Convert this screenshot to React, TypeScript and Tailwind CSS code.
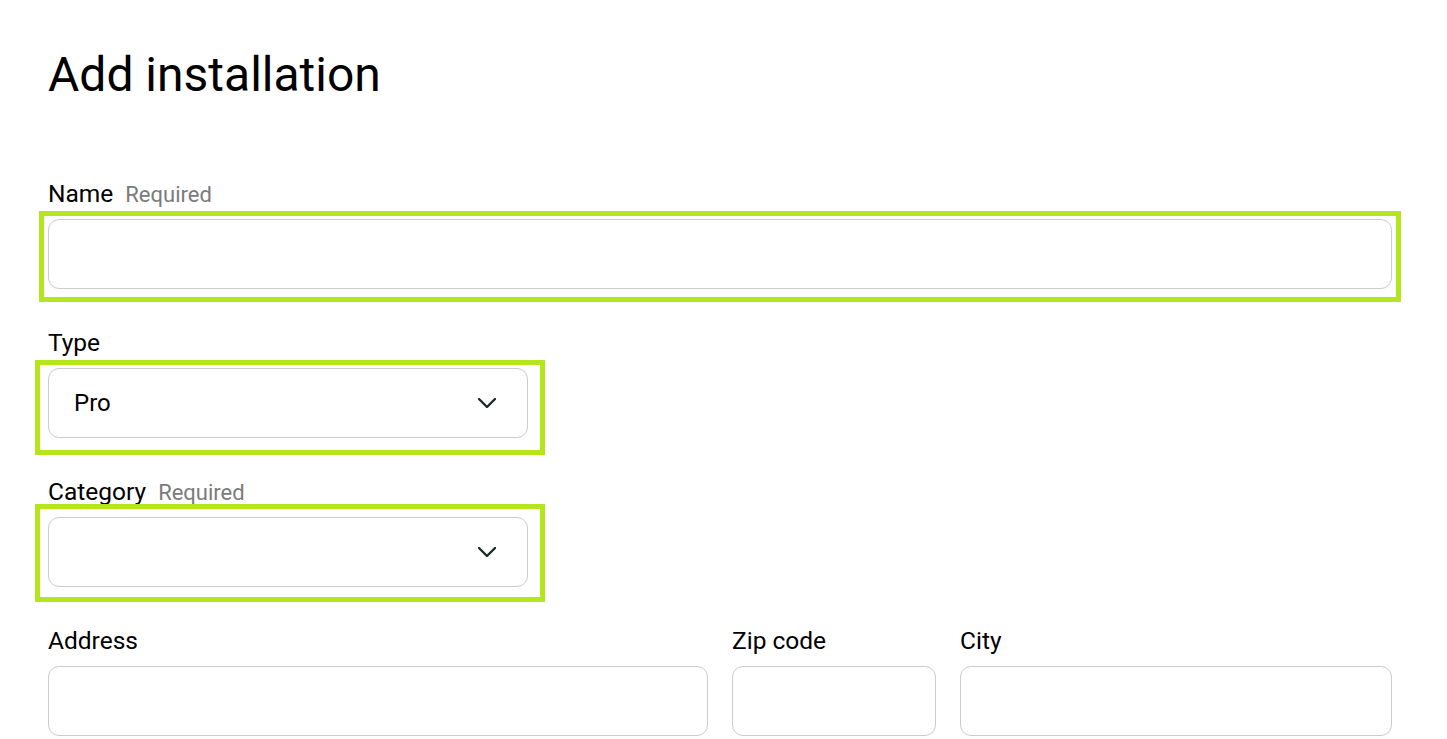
import React from 'react';

const font = { fontFamily: 'Roboto, "Noto Sans", sans-serif' };

const Chevron = () => (
  <svg width="18" height="10" viewBox="0 0 18 10" fill="none" className="shrink-0">
    <path d="M1 1l8 8 8-8" stroke="#1d2b2b" strokeWidth="2.4" strokeLinecap="round" strokeLinejoin="round" />
  </svg>
);

const Label: React.FC<{ text: string; required?: boolean }> = ({ text, required }) => (
  <div className="flex items-baseline gap-3 h-7 leading-7 mb-[11px]">
    <span className="text-[24.5px] text-black">{text}</span>
    {required && <span className="text-[22px] text-[#7b7b7b]">Required</span>}
  </div>
);

const inputCls = 'block w-full h-[70px] rounded-[11px] border border-[#c9cccc] bg-white';

export default function App() {
  return (
    <div className="min-h-screen bg-white pl-12 pt-[47px]" style={font}>
      <div className="w-[1344px]">
        <h1 className="text-[48px] leading-[56px] text-black mb-[77px]">Add installation</h1>

        <div className="mb-[40px]">
          <Label text="Name" required />
          <div className="relative">
            <span className="pointer-events-none absolute -left-[9px] -right-[9px] -top-[8px] -bottom-[13px] border-[5px] border-[#b5e61d]" />
            <div className={inputCls} />
          </div>
        </div>

        <div className="mb-[40px]">
          <Label text="Type" />
          <div className="relative w-[480px]">
            <span className="pointer-events-none absolute -left-[13px] -right-[17px] -top-[8px] -bottom-[17px] border-[5px] border-[#b5e61d]" />
            <div className={`${inputCls} flex items-center justify-between pl-[25px] pr-[31px]`}>
              <span className="text-[24px] text-black">Pro</span>
              <Chevron />
            </div>
          </div>
        </div>

        <div className="mb-[40px]">
          <Label text="Category" required />
          <div className="relative w-[480px]">
            <span className="pointer-events-none absolute -left-[13px] -right-[17px] -top-[13px] -bottom-[15px] border-[5px] border-[#b5e61d]" />
            <div className={`${inputCls} flex items-center justify-end pr-[31px]`}>
              <Chevron />
            </div>
          </div>
        </div>

        <div className="grid grid-cols-12 gap-x-6">
          <div className="col-span-6">
            <Label text="Address" />
            <div className={inputCls} />
          </div>
          <div className="col-span-2">
            <Label text="Zip code" />
            <div className={inputCls} />
          </div>
          <div className="col-span-4">
            <Label text="City" />
            <div className={inputCls} />
          </div>
        </div>
      </div>
    </div>
  );
}
